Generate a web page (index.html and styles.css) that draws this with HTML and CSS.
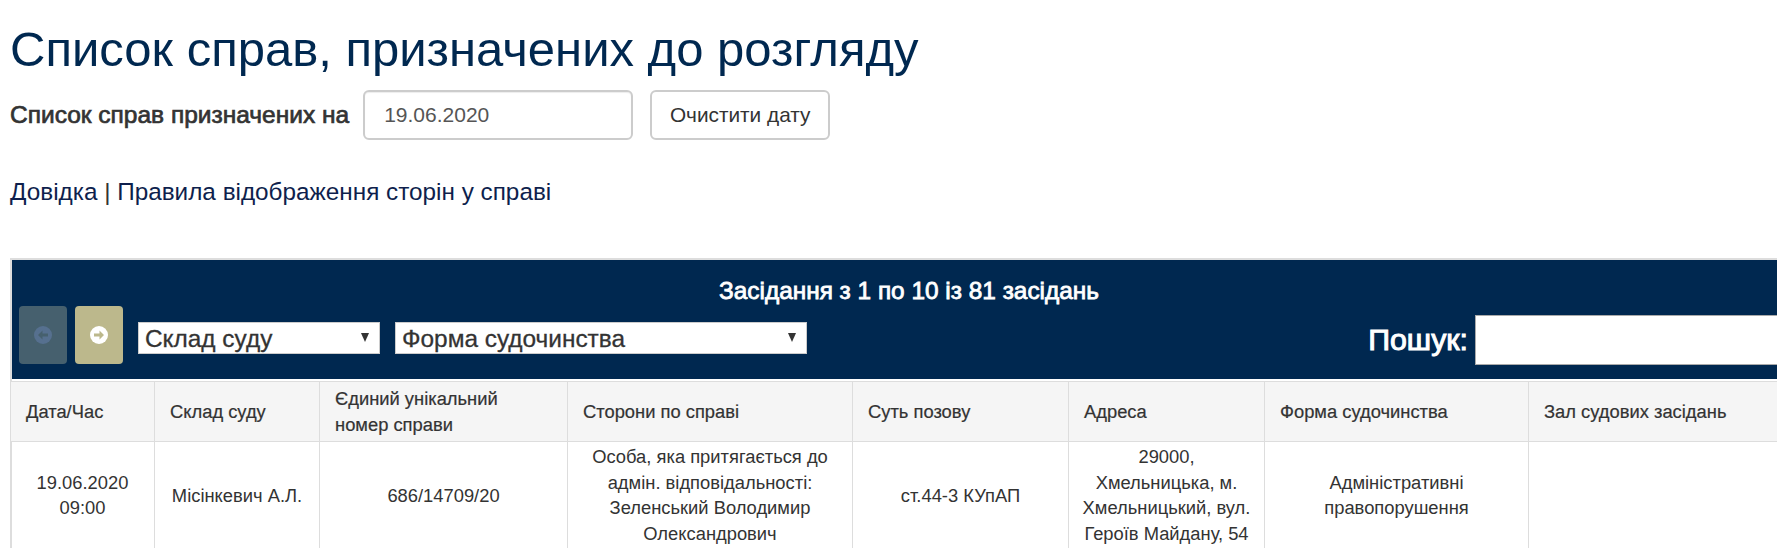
FILE: index.html
```html
<!DOCTYPE html>
<html lang="uk">
<head>
<meta charset="utf-8">
<title>Список справ</title>
<link rel="stylesheet" href="styles.css">
</head>
<body>
<main class="page">
  <h1 class="title">Список справ, призначених до розгляду</h1>
  <form class="date-form">
    <label class="date-label">Список справ призначених на</label>
    <input class="date-input" type="text" value="19.06.2020">
    <button class="clear-btn" type="button">Очистити дату</button>
  </form>
  <p class="links"><a href="#">Довідка</a> | <a href="#">Правила відображення сторін у справі</a></p>
  <section class="grid">
    <div class="toolbar">
      <div class="info">Засідання з 1 по 10 із 81 засідань</div>
      <div class="controls">
        <div class="controls-left">
          <a class="pager pager-prev" href="#"><svg width="18" height="18" viewBox="0 0 18 18"><circle cx="9" cy="9" r="9" fill="#56708f"/><path d="M4 9l4.500-4.500v3h5.500v3h-5.500v3z" fill="#46606e"/></svg></a>
          <a class="pager pager-next" href="#"><svg width="18" height="18" viewBox="0 0 18 18"><circle cx="9" cy="9" r="9" fill="#fff"/><path d="M14 9l-4.500-4.500v3h-5.500v3h5.500v3z" fill="#bcb88c"/></svg></a>
          <div class="fake-select select-a">Склад суду<span class="caret"></span></div>
          <div class="fake-select select-b">Форма судочинства<span class="caret"></span></div>
        </div>
        <div class="search">
          <label class="search-label">Пошук:</label>
          <input class="search-input" type="text">
        </div>
      </div>
    </div>
    <table class="cases">
      <colgroup>
        <col class="c1"><col class="c2"><col class="c3"><col class="c4"><col class="c5"><col class="c6"><col class="c7"><col class="c8">
      </colgroup>
      <thead>
        <tr>
          <th>Дата/Час</th>
          <th>Склад суду</th>
          <th>Єдиний унікальний номер справи</th>
          <th>Сторони по справі</th>
          <th>Суть позову</th>
          <th>Адреса</th>
          <th>Форма судочинства</th>
          <th>Зал судових засідань</th>
        </tr>
      </thead>
      <tbody>
        <tr>
          <td>19.06.2020<br>09:00</td>
          <td>Місінкевич А.Л.</td>
          <td>686/14709/20</td>
          <td>Особа, яка притягається до адмін. відповідальності: Зеленський Володимир Олександрович</td>
          <td>ст.44-3 КУпАП</td>
          <td>29000, Хмельницька, м. Хмельницький, вул. Героїв Майдану, 54</td>
          <td>Адміністративні правопорушення</td>
          <td></td>
        </tr>
      </tbody>
    </table>
  </section>
</main>
</body>
</html>
```
FILE: styles.css
```css
* { box-sizing: border-box; }
html, body { margin: 0; height: 548px; overflow: hidden; background: #fff; }
body { font-family: "Liberation Sans", Arial, sans-serif; color: #333; font-size: 16px; }
.page { width: 1808px; padding-left: 10px; }
.title { margin: 0; padding-top: 21px; height: 90px; font-size: 49px; line-height: 57px; font-weight: 400; color: #002850; white-space: nowrap; }
.date-form { display: flex; align-items: center; height: 50px; }
.date-label { font-size: 24.500px; font-weight: 400; -webkit-text-stroke: .7px #333; margin-right: 14px; white-space: nowrap; }
.date-input { width: 270px; height: 50px; padding: 0 19px; border: 2px solid #ccc; border-radius: 6px; font: 21px "Liberation Sans", Arial, sans-serif; color: #555; box-shadow: inset 0 1px 1px rgba(0,0,0,.075); }
.clear-btn { width: 180px; height: 50px; margin-left: 17px; padding: 0; background: #fff; border: 2px solid #ccc; border-radius: 6px; font: 20.800px "Liberation Sans", Arial, sans-serif; color: #333; }
.links { margin: 36px 0 0; font-size: 24.300px; line-height: 32px; height: 32px; color: #333; white-space: nowrap; }
.links a { color: #0e1f4d; text-decoration: none; }
.grid { margin-top: 50px; border-top: 2px solid #ddd; border-left: 2px solid #ddd; }
.toolbar { background: #002850; height: 119px; padding: 16px 0 0 7px; color: #fff; }
.info { padding-right: 9px; text-align: center; font-size: 24.400px; font-weight: 400; -webkit-text-stroke: .8px #fff; line-height: 29px; height: 30px; }
.controls { display: flex; justify-content: space-between; align-items: flex-start; }
.controls-left { display: flex; align-items: flex-start; }
.pager { width: 48px; height: 58px; margin-right: 8px; border-radius: 4px; display: flex; align-items: center; justify-content: center; }
.pager-prev { background: #46606e; }
.pager-next { background: #bcb88c; margin-right: 15px; }
.fake-select { position: relative; height: 32px; margin-top: 16px; padding-left: 6px; background: #fff; color: #333; border: 1px solid #ccc; font-size: 24.400px; line-height: 32px; -webkit-text-stroke: .3px #333; }
.select-a { width: 242px; margin-right: 15px; }
.select-b { width: 412px; }
.caret { position: absolute; right: 10px; top: 10px; width: 0; height: 0; border-left: 4.500px solid transparent; border-right: 4.500px solid transparent; border-top: 9px solid #333; }
.search { display: flex; align-items: center; margin-top: 9px; }
.search-label { font-size: 30.300px; font-weight: 400; -webkit-text-stroke: 1px #fff; margin-right: 7px; }
.search-input { width: 333px; height: 50px; background: #fff; border: 1px solid #aaa; }
.cases { width: calc(100% + 2px); margin-left: -2px; table-layout: fixed; border-collapse: collapse; margin-top: 2px; }
.c1 { width: 144px; } .c2 { width: 165px; } .c3 { width: 248px; } .c4 { width: 285px; }
.c5 { width: 216px; } .c6 { width: 196px; } .c7 { width: 264px; } .c8 { width: 280px; }
.cases th { background: #f5f5f5; height: 60px; padding: 0 15px; text-align: left; font-size: 18.350px; font-weight: 400; line-height: 25.700px; color: #333; border: 1px solid #ddd; vertical-align: middle; -webkit-text-stroke: .2px #333; }
.cases td { padding: 2px 10px; height: 107px; text-align: center; font-size: 18.350px; line-height: 25.700px; color: #333; border: 1px solid #ddd; vertical-align: middle; }
```
